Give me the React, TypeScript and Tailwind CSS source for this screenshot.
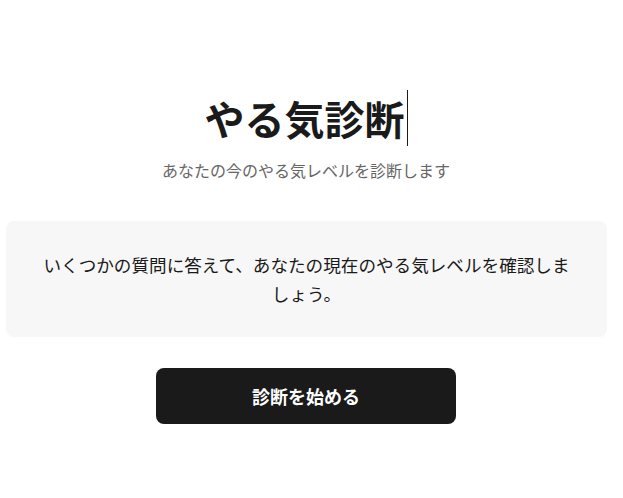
export default function App() {
  return (
    <div className="min-h-[498px] w-[623px] bg-white">
      <div
        className="w-[612px] text-[#1a1a1a]"
        style={{ fontFamily: '"Noto Sans CJK JP", "Noto Sans", sans-serif' }}
      >
        <div className="flex flex-col items-center pt-[90px]">
          <h1 className="flex h-[56px] items-center text-[40px] font-bold leading-[56px] text-[#1a1a1a]">
            <span>やる気診断</span>
            <span className="ml-[2px] h-[56px] w-px bg-[#1a1a1a]" />
          </h1>
          <p className="mt-[12px] h-[24px] text-[16px] leading-[24px] text-[#666666]">
            あなたの今のやる気レベルを診断します
          </p>
        </div>
        <div className="ml-[6px] mt-[39px] w-[601px] rounded-[8px] bg-[#f7f7f7] px-8 py-[29px] text-center text-[17.6px] leading-[29px] text-[#1a1a1a]">
          いくつかの質問に答えて、あなたの現在のやる気レベルを確認しましょう。
        </div>
        <div className="mt-[31px] flex justify-center">
          <button className="h-[56px] w-[300px] rounded-[8px] bg-[#1a1a1a] text-[18px] font-bold text-white">
            診断を始める
          </button>
        </div>
      </div>
    </div>
  );
}
